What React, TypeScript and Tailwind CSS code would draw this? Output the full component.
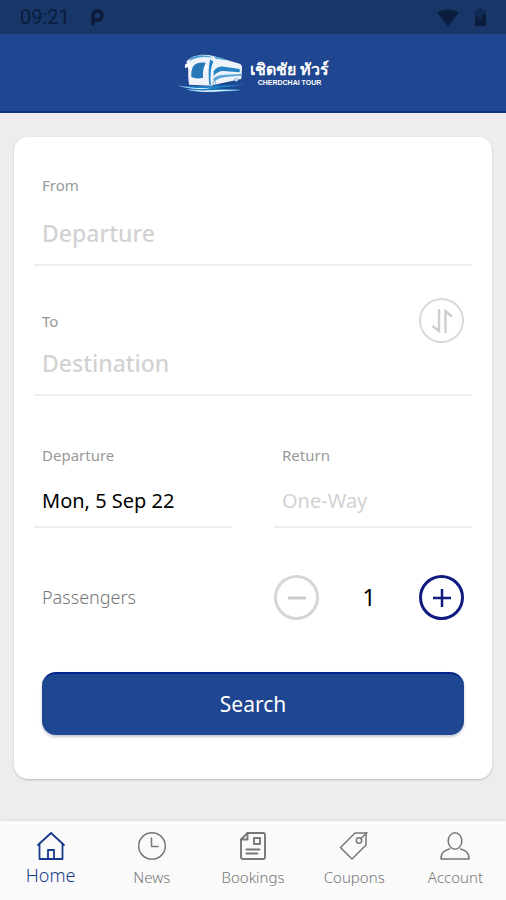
import { useState } from "react"
import type { ReactNode } from "react"

function BusLogo() {
  return (
    <svg viewBox="24 38 207 120" className="h-10 w-[69px]" aria-hidden="true">
      <path d="M28 136 C80 139 140 137 227 132 C190 140 160 141 138 144 C160 147 185 147 222 149 C160 158 80 158 50 147 C62 146 70 145 76 144 C55 143 38 141 28 136Z" fill="#1c7fc4" />
      <path d="M26 135 C50 142 80 145 130 142 C100 149 60 148 26 135Z" fill="#dcecf8" />
      <path d="M52 147 C100 155 150 146 216 149 C160 151 100 162 52 147Z" fill="#dcecf8" />
      <path d="M52 64 C70 44 100 40 130 46 L176 60 L212 70 Q220 74 219 84 L217 116 L150 130 L126 136 L60 133 C57 112 57 92 59 76Z" fill="#eef3f9" />
      <path d="M62 56 C80 43 108 41 132 52 C104 47 82 50 62 61Z" fill="#4c9bd2" />
      <path d="M134 48 L160 53 L172 60 L140 55Z" fill="#57a4d6" />
      <path d="M76 74 C84 67 100 65 110 68 C103 80 101 94 102 112 C90 116 76 114 67 110 C66 96 68 82 76 74Z" fill="#2878b8" />
      <path d="M124 57 C118 78 118 105 121 134 L126 134 C123 106 125 80 133 64Z" fill="#2785c6" />
      <path d="M134 92 C144 79 156 76 170 80 L212 86 L212 96 L164 92 C150 92 140 98 134 108Z" fill="#2383c4" />
      <path d="M132 116 C148 100 174 104 217 101 L217 106 C174 109 152 109 136 123Z" fill="#57a4d6" />
      <path d="M48 73 C55 66 62 68 64 74 L59 90 L56 80 L48 84Z" fill="#fff" />
      <path d="M110 74 L117 78 L112 96 L107 92Z" fill="#fff" />
      <circle cx="136" cy="128" r="6" fill="#5c9bd0" />
      <circle cx="136" cy="128" r="4" fill="#e4eff8" />
      <circle cx="202" cy="118" r="6" fill="#5c9bd0" />
      <circle cx="202" cy="118" r="4" fill="#e4eff8" />
    </svg>
  )
}

function NavIcon({ children }: { children: ReactNode }) {
  return (
    <svg
      viewBox="0 0 30 30"
      className="size-[30px]"
      fill="none"
      stroke="currentColor"
      strokeWidth="1.5"
      strokeLinecap="round"
      strokeLinejoin="round"
      aria-hidden="true"
    >
      {children}
    </svg>
  )
}

const tabs = [
  {
    label: "Home",
    icon: (
      <NavIcon>
        <path d="M2 14 15 2l13 12M3.5 13v15h23V13" strokeWidth="1.800" />
        <path d="M12 28v-9h6v9" strokeWidth="1.800" />
      </NavIcon>
    ),
  },
  {
    label: "News",
    icon: (
      <NavIcon>
        <circle cx="15" cy="15" r="13.3" />
        <path d="M14.5 7v8.500H21" />
      </NavIcon>
    ),
  },
  {
    label: "Bookings",
    icon: (
      <NavIcon>
        <g strokeWidth="1.900">
          <path d="M9.5 2H25a2 2 0 0 1 2 2v22a2 2 0 0 1-2 2H5a2 2 0 0 1-2-2V8.500z" />
          <path d="M9.500 2v6.500H3M16 7h6v6h-6zM8.500 18.500h13M8.500 22.500h11" />
        </g>
      </NavIcon>
    ),
  },
  {
    label: "Coupons",
    icon: (
      <NavIcon>
        <path d="M16 2h11v12L13 28 1.500 16.500z" />
        <circle cx="20" cy="9.500" r="2.700" />
        <path d="m22 7.500 6-6" />
      </NavIcon>
    ),
  },
  {
    label: "Account",
    icon: (
      <NavIcon>
        <ellipse cx="15" cy="10" rx="6.800" ry="8.300" />
        <path d="M9.500 18C4.500 19.500 1 21 1 28h28c0-7-3.500-8.500-8.500-10" />
      </NavIcon>
    ),
  },
]

const fieldClass =
  "block w-full border-b-2 border-[#eeeeee] bg-transparent px-2 outline-none placeholder:text-[#d2d2d2]"
const labelClass = "block h-6 px-2 text-[15px] leading-6 text-[#999999]"

export default function App() {
  const [from, setFrom] = useState("")
  const [to, setTo] = useState("")
  const [departure, setDeparture] = useState("Mon, 5 Sep 22")
  const [returnDate, setReturnDate] = useState("")
  const [passengers, setPassengers] = useState(1)
  const [activeTab, setActiveTab] = useState("Home")

  const swap = () => {
    setFrom(to)
    setTo(from)
  }

  return (
    <div className="flex min-h-screen flex-col bg-[#ededed] font-['Noto_Sans',sans-serif]">
      {/* Status bar */}
      <div className="flex h-[34px] items-center justify-between bg-[#183768] px-5 text-[#0b1c3c]">
        <div className="flex items-center gap-5">
          <span className="font-['Roboto',sans-serif] text-[20px]">09:21</span>
          <svg viewBox="0 0 14 18" className="h-[18px] w-3.5" fill="none" stroke="currentColor" strokeWidth="3.8" aria-hidden="true">
            <path d="M3 15.500V7.500a4.500 4.500 0 1 1 4.500 4.500H6" strokeLinecap="round" />
          </svg>
        </div>
        <div className="flex items-center gap-4">
          <svg viewBox="0 0 22 17" className="h-[17px] w-[22px]" fill="currentColor" aria-hidden="true">
            <path d="M0 3.500C6-.5 16-.5 22 3.500L11 17z" />
          </svg>
          <svg viewBox="0 0 11 18" className="h-[18px] w-[11px]" aria-hidden="true">
            <path d="M3.500 0h4v2H11v16H0V2h3.500z" fill="#102a55" />
            <path d="M0 9h3l2 5 3-8h3v12H0z" fill="currentColor" />
          </svg>
        </div>
      </div>

      <header className="flex h-[79px] items-center justify-center gap-1 border-b-2 border-[#0c3186] bg-[#1f4690]">
        <BusLogo />
        <div className="text-center text-white">
          <div className="text-[16px] leading-5 font-bold">เชิดชัย ทัวร์</div>
          <div className="font-['Liberation_Sans',sans-serif] text-[7px] leading-2 font-bold">CHERDCHAI TOUR</div>
        </div>
      </header>

      <main className="flex-1 px-3.5 py-6">
        <form
          className="rounded-[14px] bg-white px-5 pt-9 pb-11 shadow-[0_1px_2px_#bbbbbb]"
          onSubmit={(e) => e.preventDefault()}
        >
          <label htmlFor="from" className={labelClass}>
            From
          </label>
          <input
            id="from"
            placeholder="Departure"
            value={from}
            onChange={(e) => setFrom(e.target.value)}
            className={`${fieldClass} mt-1 h-[65px] text-[23px] font-medium`}
          />

          <div className="mt-8 flex items-center justify-between pr-2">
            <label htmlFor="to" className={labelClass}>
              To
            </label>
            <button
              type="button"
              onClick={swap}
              aria-label="Swap departure and destination"
              className="flex size-[45px] items-center justify-center rounded-full border-2 border-[#dadada] text-[#cecece]"
            >
              <svg viewBox="0 0 22 26" className="h-[26px] w-[22px]" fill="none" stroke="currentColor" strokeWidth="2.400" aria-hidden="true">
                <path d="M8 1v22L1.500 18M14.500 25V3L21 8.500" />
              </svg>
            </button>
          </div>
          <input
            id="to"
            placeholder="Destination"
            value={to}
            onChange={(e) => setTo(e.target.value)}
            className={`${fieldClass} h-[53px] pb-3 text-[23px] font-medium`}
          />

          <div className="mt-[47px] grid grid-cols-2 gap-[42px]">
            <div>
              <label htmlFor="departure" className={labelClass}>
                Departure
              </label>
              <input
                id="departure"
                value={departure}
                onChange={(e) => setDeparture(e.target.value)}
                className={`${fieldClass} mt-2 h-[53px] text-[20px] text-black`}
              />
            </div>
            <div>
              <label htmlFor="return" className={labelClass}>
                Return
              </label>
              <input
                id="return"
                placeholder="One-Way"
                value={returnDate}
                onChange={(e) => setReturnDate(e.target.value)}
                className={`${fieldClass} mt-2 h-[53px] text-[20px]`}
              />
            </div>
          </div>

          {/* Passenger counter */}
          <div className="mt-[47px] grid grid-cols-2 items-center gap-[42px]">
            <span className="px-2 text-[18px] font-light text-[#777777]">Passengers</span>
            <div className="flex items-center justify-between pr-2">
              <button
                type="button"
                aria-label="Remove passenger"
                onClick={() => setPassengers(Math.max(1, passengers - 1))}
                className="flex size-[45px] items-center justify-center rounded-full border-[3px] border-[#d6d6d6] text-[#cccccc]"
              >
                <svg viewBox="0 0 20 20" className="size-5" stroke="currentColor" strokeWidth="3" aria-hidden="true">
                  <path d="M1 10h18" />
                </svg>
              </button>
              <output className="text-[23px]">{passengers}</output>
              <button
                type="button"
                aria-label="Add passenger"
                onClick={() => setPassengers(passengers + 1)}
                className="flex size-[45px] items-center justify-center rounded-full border-[3px] border-[#101b80] text-[#101b80]"
              >
                <svg viewBox="0 0 20 20" className="size-5" stroke="currentColor" strokeWidth="2.5" aria-hidden="true">
                  <path d="M1 10h18M10 1v18" />
                </svg>
              </button>
            </div>
          </div>

          <div className="mt-[52px] px-2">
            <button
              type="submit"
              className="h-[63px] w-full rounded-[14px] border-t-2 border-[#06248a] bg-[#1f4690] text-[21px] text-white shadow-[0_2px_3px_#c4c8d4]"
            >
              Search
            </button>
          </div>
        </form>
      </main>

      <nav className="grid h-[79px] grid-cols-5 bg-[#fafafa] shadow-[0_-1px_3px_#dcdcdc]">
        {tabs.map((tab) => (
          <button
            key={tab.label}
            type="button"
            onClick={() => setActiveTab(tab.label)}
            className={`flex flex-col items-center pt-2.5 ${
              activeTab === tab.label ? "text-[#173a8c]" : "text-[#777777]"
            }`}
          >
            {tab.icon}
            <span className={activeTab === tab.label ? "text-[18px] leading-7 font-light" : "text-[15px] leading-8 font-light"}>
              {tab.label}
            </span>
          </button>
        ))}
      </nav>
    </div>
  )
}
